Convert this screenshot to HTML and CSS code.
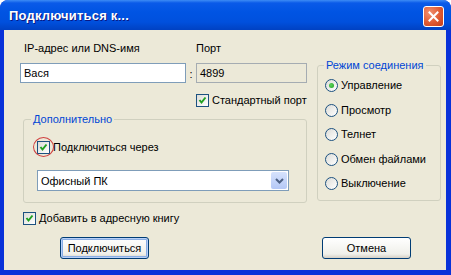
FILE: index.html
```html
<!DOCTYPE html>
<html lang="ru">
<head>
    <meta charset="UTF-8">
    <title>Подключиться к...</title>
    <link rel="stylesheet" href="styles.css">
</head>
<body>
    <div class="window">
        <div class="titlebar">
            <span class="title">Подключиться к...</span>
            <span class="close">
                <svg width="11" height="11" viewBox="0 0 11 11">
                    <path d="M1.5 1.5 L9.5 9.5 M9.5 1.5 L1.5 9.5" stroke="#fff" stroke-width="2" stroke-linecap="square"/>
                </svg>
            </span>
        </div>

        <div class="client">
            <div class="top">
                <div class="left">
                    <div class="labels">
                        <span class="lbl-host">IP-адрес или DNS-имя</span>
                        <span class="lbl-port">Порт</span>
                    </div>
                    <div class="inputs">
                        <div class="field host">Вася</div>
                        <span class="colon">:</span>
                        <div class="field port">4899</div>
                    </div>
                    <div class="option std-port">
                        <span class="check on"></span>
                        <span>Стандартный порт</span>
                    </div>

                    <fieldset class="group extra">
                        <legend>Дополнительно</legend>
                        <div class="group-body">
                            <div class="option">
                                <span class="check on marked"></span>
                                <span>Подключиться через</span>
                            </div>
                            <div class="combo">
                                <span>Офисный ПК</span>
                                <span class="combo-btn">
                                    <svg width="9" height="6" viewBox="0 0 9 6">
                                        <path d="M1 1 L4.5 4.5 L8 1" fill="none" stroke="#4d6185" stroke-width="2"/>
                                    </svg>
                                </span>
                            </div>
                        </div>
                    </fieldset>
                </div>

                <fieldset class="group mode">
                    <legend>Режим соединения</legend>
                    <div class="group-body radios">
                        <div class="option"><span class="radio on"></span><span>Управление</span></div>
                        <div class="option"><span class="radio"></span><span>Просмотр</span></div>
                        <div class="option"><span class="radio"></span><span>Телнет</span></div>
                        <div class="option"><span class="radio"></span><span>Обмен файлами</span></div>
                        <div class="option"><span class="radio"></span><span>Выключение</span></div>
                    </div>
                </fieldset>
            </div>

            <div class="option book">
                <span class="check on"></span>
                <span>Добавить в адресную книгу</span>
            </div>

            <div class="buttons">
                <button class="btn default">Подключиться</button>
                <button class="btn">Отмена</button>
            </div>
        </div>
    </div>
</body>
</html>
```

FILE: styles.css
```css
body {
    margin: 0;
    background: #fff;
    font-family: "Liberation Sans", Arial, sans-serif;
    font-size: 11px;
    color: #000;
}
.window {
    width: 451px;
    height: 275px;
    display: flex;
    flex-direction: column;
    background: #0831d9;
    border-radius: 8px 8px 0 0;
    overflow: hidden;
}
.titlebar {
    height: 30px;
    flex: none;
    display: flex;
    align-items: center;
    justify-content: space-between;
    padding: 0 7px 0 9px;
    background: linear-gradient(#3d8cf5 0, #0a5ae8 3px, #0054e3 12px, #0050dd 22px, #0041c2 30px);
    color: #fff;
}
.title {
    font-weight: bold;
    font-size: 13px;
    letter-spacing: 0.2px;
    text-shadow: 1px 1px 0 #0a1883;
}
.close {
    width: 19px;
    height: 19px;
    margin-top: 2px;
    border: 1px solid #fff;
    border-radius: 3px;
    background: radial-gradient(circle at 30% 30%, #f09070, #e05a32 55%, #c23d18);
    display: flex;
    align-items: center;
    justify-content: center;
}
.client {
    flex: 1;
    margin: 0 5px 5px 4px;
    background: #ece9d8;
    padding: 11px 0 0 16px;
    display: flex;
    flex-direction: column;
}
.top {
    display: flex;
    align-items: flex-start;
    gap: 10px;
}
.left {
    width: 287px;
}
.labels {
    height: 14px;
    line-height: 14px;
    display: flex;
}
.lbl-host {
    padding-left: 4px;
    width: 172px;
}
.inputs {
    margin-top: 8px;
    display: flex;
    height: 20px;
}
.field {
    box-sizing: border-box;
    height: 20px;
    border: 1px solid #7f9db9;
    background: #fff;
    line-height: 18px;
    padding-left: 3px;
}
.host {
    width: 166px;
}
.colon {
    width: 10px;
    text-align: center;
    line-height: 22px;
}
.port {
    width: 111px;
    background: #ece9d8;
    border-color: #a5acb2;
}
.option {
    display: flex;
    align-items: center;
    height: 13px;
    line-height: 13px;
    gap: 3px;
    white-space: nowrap;
}
.std-port {
    margin: 11px 0 0 176px;
}
.check {
    position: relative;
    box-sizing: border-box;
    width: 13px;
    height: 13px;
    flex: none;
    border: 1px solid #1c5180;
    background: linear-gradient(135deg, #dcdcd7, #fff);
}
.check.on {
    background-image: url("data:image/svg+xml,%3Csvg xmlns='http://www.w3.org/2000/svg' width='11' height='11'%3E%3Cpath d='M2.5 5 L4.5 7.5 L8.5 2.5' fill='none' stroke='%2321a121' stroke-width='2'/%3E%3C/svg%3E"), linear-gradient(135deg, #dcdcd7, #fff);
}
/* annotation circle drawn over the checkbox */
.check.marked::after {
    content: "";
    position: absolute;
    left: -5px;
    top: -5px;
    width: 19px;
    height: 18px;
    border: 1px solid #d04040;
    border-radius: 50%;
}
.group {
    margin: 0;
    padding: 0;
    border: 1px solid #d0d0bf;
    border-radius: 3px;
    box-sizing: border-box;
}
.group legend {
    color: #0046d5;
    padding: 0 2px;
    line-height: 13px;
}
.extra {
    margin: 6px 0 0 3px;
    width: 284px;
}
.extra legend {
    margin-left: 7px;
}
.extra .group-body {
    padding: 15px 0 11px 13px;
}
.combo {
    margin-top: 16px;
    box-sizing: border-box;
    width: 252px;
    height: 21px;
    border: 1px solid #7f9db9;
    background: #fff;
    display: flex;
    align-items: center;
    justify-content: space-between;
    padding: 0 1px 0 3px;
}
.combo-btn {
    width: 16px;
    height: 17px;
    border-radius: 2px;
    background: linear-gradient(#d6e2fc, #b4c8f6);
    display: flex;
    align-items: center;
    justify-content: center;
}
.mode {
    margin-top: 18px;
    width: 124px;
}
.mode legend {
    margin-left: 6px;
}
.radios {
    display: flex;
    flex-direction: column;
    gap: 11.5px;
    padding: 7px 0 10px 7px;
}
.radio {
    box-sizing: border-box;
    width: 13px;
    height: 13px;
    flex: none;
    border: 1px solid #1c5180;
    border-radius: 50%;
    background: linear-gradient(135deg, #dcdcd7, #fff);
    display: flex;
    align-items: center;
    justify-content: center;
}
.radio.on::after {
    content: "";
    width: 5px;
    height: 5px;
    border-radius: 50%;
    background: radial-gradient(circle at 40% 40%, #5dd35d, #21a121);
}
.book {
    margin: 9px 0 0 3px;
}
.buttons {
    margin-top: 12px;
    display: flex;
    gap: 173px;
    padding-left: 40px;
}
.btn {
    box-sizing: border-box;
    width: 89px;
    height: 22px;
    border: 1px solid #003c74;
    border-radius: 3px;
    background: linear-gradient(#fff, #f0f0ea 80%, #d6d0c5);
    font-family: inherit;
    font-size: 11px;
    padding: 0;
}
.btn.default {
    box-shadow: inset 0 0 0 1px #b8d0f8, inset 0 0 0 2px #89ade4;
}
```
